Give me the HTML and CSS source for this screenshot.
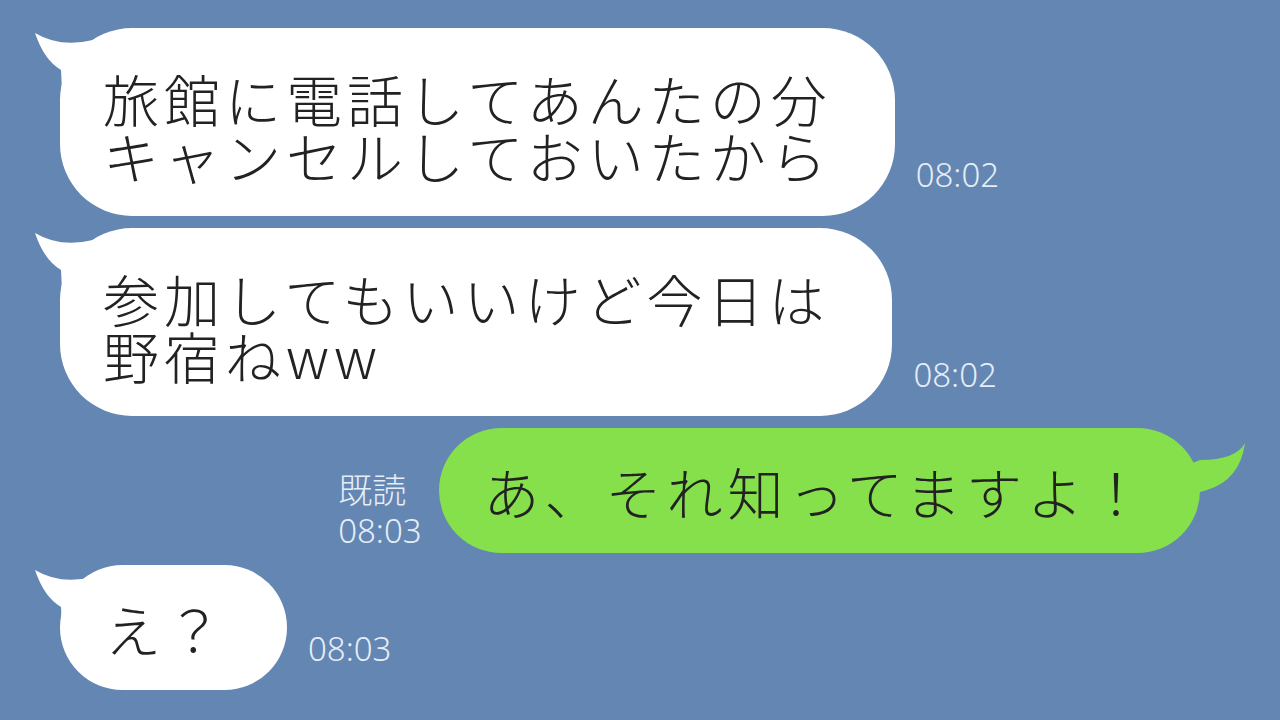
FILE: index.html
```html
<!DOCTYPE html>
<html lang="ja">
<head>
    <meta charset="UTF-8">
    <meta name="viewport" content="width=device-width, initial-scale=1.0">
    <title>トーク</title>
    <link rel="stylesheet" href="styles.css">
</head>
<body>

<div class="chat">
    <div class="row">
        <div class="bubble">
            <svg class="tail" viewBox="0 0 70 70" width="70" height="70"><path d="M3 5 Q28 20 61 12 L72 40 L30 62 L29 42 Q12 32 3 5 Z"/></svg>
            <p>旅館に電話してあんたの分<br>キャンセルしておいたから</p>
        </div>
        <span class="time">08:02</span>
    </div>

    <div class="row">
        <div class="bubble">
            <svg class="tail" viewBox="0 0 70 70" width="70" height="70"><path d="M3 5 Q28 20 61 12 L72 40 L30 62 L29 42 Q12 32 3 5 Z"/></svg>
            <p>参加してもいいけど今日は<br>野宿ねww</p>
        </div>
        <span class="time">08:02</span>
    </div>

    <div class="row me">
        <div class="read"><span class="read-label">既読</span><br>08:03</div>
        <div class="bubble green">
            <svg class="tail" viewBox="0 0 70 70" width="70" height="70"><path d="M65 15 Q56 32 20 32 L0 40 L0 70 L27 62 Q60 52 65 15 Z"/></svg>
            <p>あ、それ知ってますよ！</p>
        </div>
    </div>

    <div class="row">
        <div class="bubble short">
            <svg class="tail" viewBox="0 0 70 70" width="70" height="70"><path d="M3 5 Q28 20 61 12 L72 40 L30 62 L29 42 Q12 32 3 5 Z"/></svg>
            <p>え？</p>
        </div>
        <span class="time">08:03</span>
    </div>
</div>

</body>
</html>
```

FILE: styles.css
```css
* {
    margin: 0;
    padding: 0;
    box-sizing: border-box;
}

body {
    width: 1280px;
    height: 720px;
    overflow: hidden;
    background-color: #6386b3;
    font-family: "Noto Sans CJK JP", "Noto Sans", sans-serif;
}

.chat {
    display: flex;
    flex-direction: column;
    gap: 12px;
    padding: 28px 80px 0 60px;
}

.row {
    display: flex;
    align-items: flex-end;
    gap: 21px;
}

.row.me {
    justify-content: flex-end;
    gap: 17px;
}

.bubble {
    position: relative;
    background-color: #ffffff;
    border-radius: 72px;
    padding: 41px 63px 33px 43px;
    color: #222;
    font-size: 56px;
    font-weight: 300;
    line-height: 57px;
    letter-spacing: 5px;
}

.bubble p {
    position: relative;
}

.bubble.green {
    background-color: #85e04b;
    padding: 34px 51px 34px 45px;
    letter-spacing: 5px;
}

.bubble.short {
    padding: 34px 60px 34px 45px;
}

.tail {
    position: absolute;
    top: 0;
    left: -28px;
    fill: #ffffff;
}

.green .tail {
    left: auto;
    right: -50px;
    fill: #85e04b;
}

.time {
    color: #e6edf6;
    font-family: "Noto Sans", sans-serif;
    font-weight: 300;
    font-size: 33px;
    line-height: 40px;
    margin-bottom: 21px;
}

.read {
    color: #e6edf6;
    font-family: "Noto Sans", sans-serif;
    font-weight: 300;
    font-size: 33px;
    line-height: 40px;
    margin-bottom: 2px;
}

.read-label {
    font-family: "Noto Sans CJK JP", sans-serif;
    font-size: 34px;
}
```
